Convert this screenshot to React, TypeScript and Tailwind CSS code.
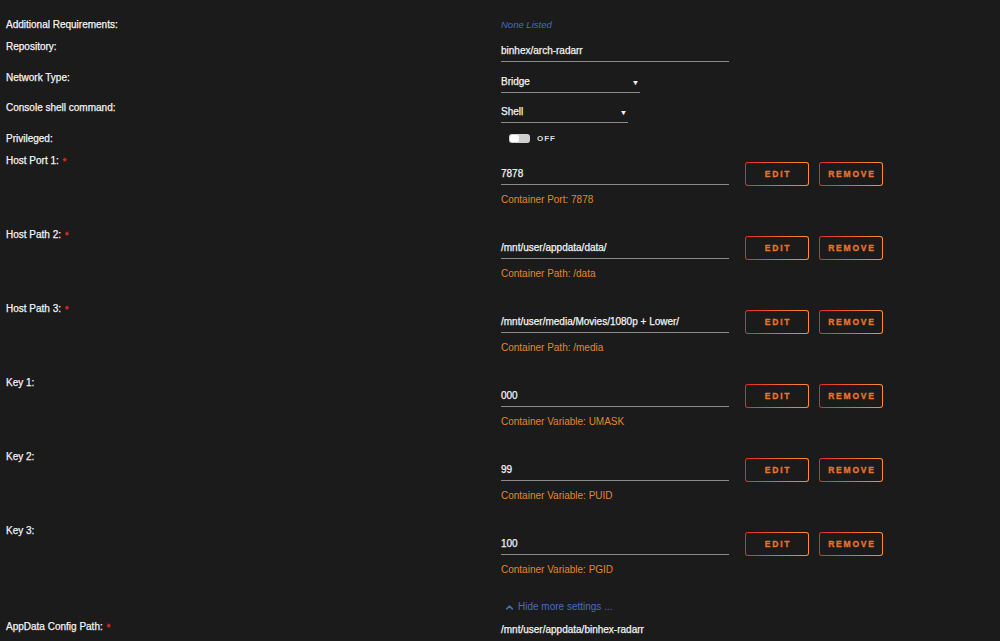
import { ChevronUp } from 'lucide-react';

const font = { fontFamily: "'Liberation Sans', Arial, sans-serif" };

type ConfigRow = { label: string; value: string; note: string; required?: boolean };

const configRows: ConfigRow[] = [
  { label: 'Host Port 1:', value: '7878', note: 'Container Port: 7878', required: true },
  { label: 'Host Path 2:', value: '/mnt/user/appdata/data/', note: 'Container Path: /data', required: true },
  { label: 'Host Path 3:', value: '/mnt/user/media/Movies/1080p + Lower/', note: 'Container Path: /media', required: true },
  { label: 'Key 1:', value: '000', note: 'Container Variable: UMASK' },
  { label: 'Key 2:', value: '99', note: 'Container Variable: PUID' },
  { label: 'Key 3:', value: '100', note: 'Container Variable: PGID' },
];

function Label({ text, required }: { text: string; required?: boolean }) {
  return (
    <div className="w-[495px] shrink-0 pl-1.5 text-[10px] leading-[14px] text-[#f2f2f2] [-webkit-text-stroke:0.25px_#f2f2f2]">
      {text}
      {required && <span className="ml-1 text-[#e22828] [-webkit-text-stroke:0.4px_#e22828] align-top text-[9px]">*</span>}
    </div>
  );
}

function GradientButton({ children }: { children: string }) {
  return (
    <div className="w-[64px] h-[24px] rounded-[3px] p-px bg-gradient-to-r from-[#e22828] to-[#ff8c2f]">
      <div className="w-full h-full rounded-[2px] bg-[#1c1b1b] flex items-center justify-center">
        <span className="text-[8.5px] font-bold tracking-[1.8px] text-[#e8742c] [-webkit-text-stroke:0.3px_#e8742c] pl-[2px]">
          {children}
        </span>
      </div>
    </div>
  );
}

function Select({ value, width }: { value: string; width: string }) {
  return (
    <div className={`${width} flex items-center justify-between border-b border-[#8a8a8a] pb-[3px] text-[10px] leading-[14px] text-[#f2f2f2] [-webkit-text-stroke:0.25px_#f2f2f2]`}>
      <span>{value}</span>
      <span className="text-[7px] leading-none mr-[1px]">▼</span>
    </div>
  );
}

export default function App() {
  return (
    <div className="w-[1000px] h-[641px] overflow-hidden bg-[#1c1b1b] pt-[18px]" style={font}>
      <div className="flex h-[22px]">
        <Label text="Additional Requirements:" />
        <div className="pl-1.5 text-[9.5px] leading-[14px] italic text-[#486dba]">None Listed</div>
      </div>

      <div className="flex h-[31px]">
        <Label text="Repository:" />
        <div className="pl-1.5 pt-[4px]">
          <div className="w-[228px] border-b border-[#8a8a8a] pb-[3px] text-[10px] leading-[14px] text-[#f2f2f2] [-webkit-text-stroke:0.25px_#f2f2f2]">
            binhex/arch-radarr
          </div>
        </div>
      </div>

      <div className="flex h-[30px]">
        <Label text="Network Type:" />
        <div className="pl-1.5 pt-[4px]">
          <Select value="Bridge" width="w-[139px]" />
        </div>
      </div>

      <div className="flex h-[31px]">
        <Label text="Console shell command:" />
        <div className="pl-1.5 pt-[4px]">
          <Select value="Shell" width="w-[127px]" />
        </div>
      </div>

      <div className="flex h-[22px]">
        <Label text="Privileged:" />
        <div className="pl-[14px] flex items-start pt-[2px] gap-[7px]">
          <div className="w-[21px] h-[9px] rounded-[3px] bg-[#cfcfcf] p-px flex">
            <div className="w-[9px] h-[7px] rounded-[2px] bg-white" />
          </div>
          <span className="text-[8px] leading-[10px] font-bold tracking-[1px] text-[#dcdcdc] -mt-[0.5px]">OFF</span>
        </div>
      </div>

      {configRows.map((row) => (
        <div key={row.label} className="flex h-[74px]">
          <Label text={row.label} required={row.required} />
          <div className="pl-1.5 flex items-start">
            <div className="w-[228px] pt-[13px]">
              <div className="border-b border-[#8a8a8a] pb-[3px] text-[10px] leading-[14px] text-[#f2f2f2] [-webkit-text-stroke:0.25px_#f2f2f2]">
                {row.value}
              </div>
              <div className="mt-[8px] text-[10px] leading-[14px] text-[#e2862b]">{row.note}</div>
            </div>
            <div className="ml-[16px] mt-[8px] flex gap-[10px]">
              <GradientButton>EDIT</GradientButton>
              <GradientButton>REMOVE</GradientButton>
            </div>
          </div>
        </div>
      ))}

      <div className="flex h-[22px] pt-[2px]">
        <div className="w-[495px] shrink-0" />
        <div className="pl-[9px] flex items-center h-[14px] gap-[3px] text-[10px] leading-[14px] text-[#486dba]">
          <ChevronUp size={11} strokeWidth={3.5} />
          <span>Hide more settings ...</span>
        </div>
      </div>

      <div className="flex">
        <Label text="AppData Config Path:" required />
        <div className="pl-1.5 pt-[3px] text-[10px] leading-[14px] text-[#f2f2f2] [-webkit-text-stroke:0.25px_#f2f2f2]">/mnt/user/appdata/binhex-radarr</div>
      </div>
    </div>
  );
}
